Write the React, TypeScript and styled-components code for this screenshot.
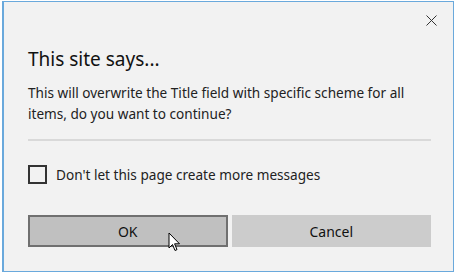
import React, { useState } from 'react';
import styled, { createGlobalStyle } from 'styled-components';

const GlobalStyle = createGlobalStyle`
body {
  margin: 0;
  background: #ffffff;
  font-family: "Noto Sans", "Open Sans", sans-serif;
}
`;

const Dialog = styled.div`
position: relative;
box-sizing: border-box;
width: 452px;
height: 271px;
margin: 1px 0 0 2px;
border: 1px solid #6aa9dc;
border-left-width: 2px;
background: #f2f2f2;
display: flex;
flex-direction: column;
padding: 0 22px 0 24px;
color: #1a1a1a;
`;

const TopBar = styled.div`
display: flex;
justify-content: flex-end;
height: 36px;
margin-right: -22px;
`;

const CloseButton = styled.button`
width: 44px;
height: 36px;
border: none;
background: transparent;
display: flex;
align-items: center;
justify-content: center;
padding: 0;
cursor: pointer;
`;

const Title = styled.div`
font-size: 19px;
line-height: 26px;
margin-top: 8px;
color: #111;
`;

const Message = styled.div`
font-size: 13.6px;
line-height: 21px;
margin-top: 10px;
color: #222;
`;

const Divider = styled.div`
height: 2px;
background: #d9d9d9;
margin-top: 15px;
`;

const CheckRow = styled.label`
display: flex;
align-items: center;
gap: 9px;
margin-top: 24px;
font-size: 13.6px;
color: #222;
cursor: pointer;
`;

const Box = styled.span<{ checked: boolean }>`
box-sizing: border-box;
width: 19px;
height: 19px;
border: 2px solid #333;
background: ${(p) => (p.checked ? '#333' : 'transparent')};
`;

const Buttons = styled.div`
display: grid;
grid-template-columns: 1fr 1fr;
gap: 4px;
margin-top: 31px;
`;

const Button = styled.button<{ focused?: boolean }>`
box-sizing: border-box;
height: 32px;
font-family: "Noto Sans", "Open Sans", sans-serif;
font-size: 14px;
color: #111;
background: ${(p) => (p.focused ? '#c0c0c0' : '#cccccc')};
border: 2px solid ${(p) => (p.focused ? '#707070' : '#cccccc')};
padding: 0;
`;

const Pointer = styled.svg`
position: absolute;
left: 164px;
top: 230px;
pointer-events: none;
`;

const App = () => {
  const [checked, setChecked] = useState(false);

  return (
    <>
      <GlobalStyle />
      <Dialog>
        <TopBar>
          <CloseButton aria-label="Close">
            <svg width="11" height="11" viewBox="0 0 11 11">
              <path d="M0.5 0.5 L10.5 10.5 M10.5 0.5 L0.5 10.5" stroke="#333" strokeWidth="1" />
            </svg>
          </CloseButton>
        </TopBar>
        <Title>This site says...</Title>
        <Message>
          This will overwrite the Title field with specific scheme for all items, do you want to continue?
        </Message>
        <Divider />
        <CheckRow onClick={() => setChecked(!checked)}>
          <Box checked={checked} />
          Don't let this page create more messages
        </CheckRow>
        <Buttons>
          <Button focused>OK</Button>
          <Button>Cancel</Button>
        </Buttons>
        <Pointer width="13" height="20" viewBox="0 0 13 20">
          <path d="M1 1 L1 16 L4.5 12.5 L7 18.5 L9 17.6 L6.6 11.8 L11.5 11.8 Z" fill="#fff" stroke="#000" strokeWidth="1" strokeLinejoin="miter" />
        </Pointer>
      </Dialog>
    </>
  );
};

export default App;
